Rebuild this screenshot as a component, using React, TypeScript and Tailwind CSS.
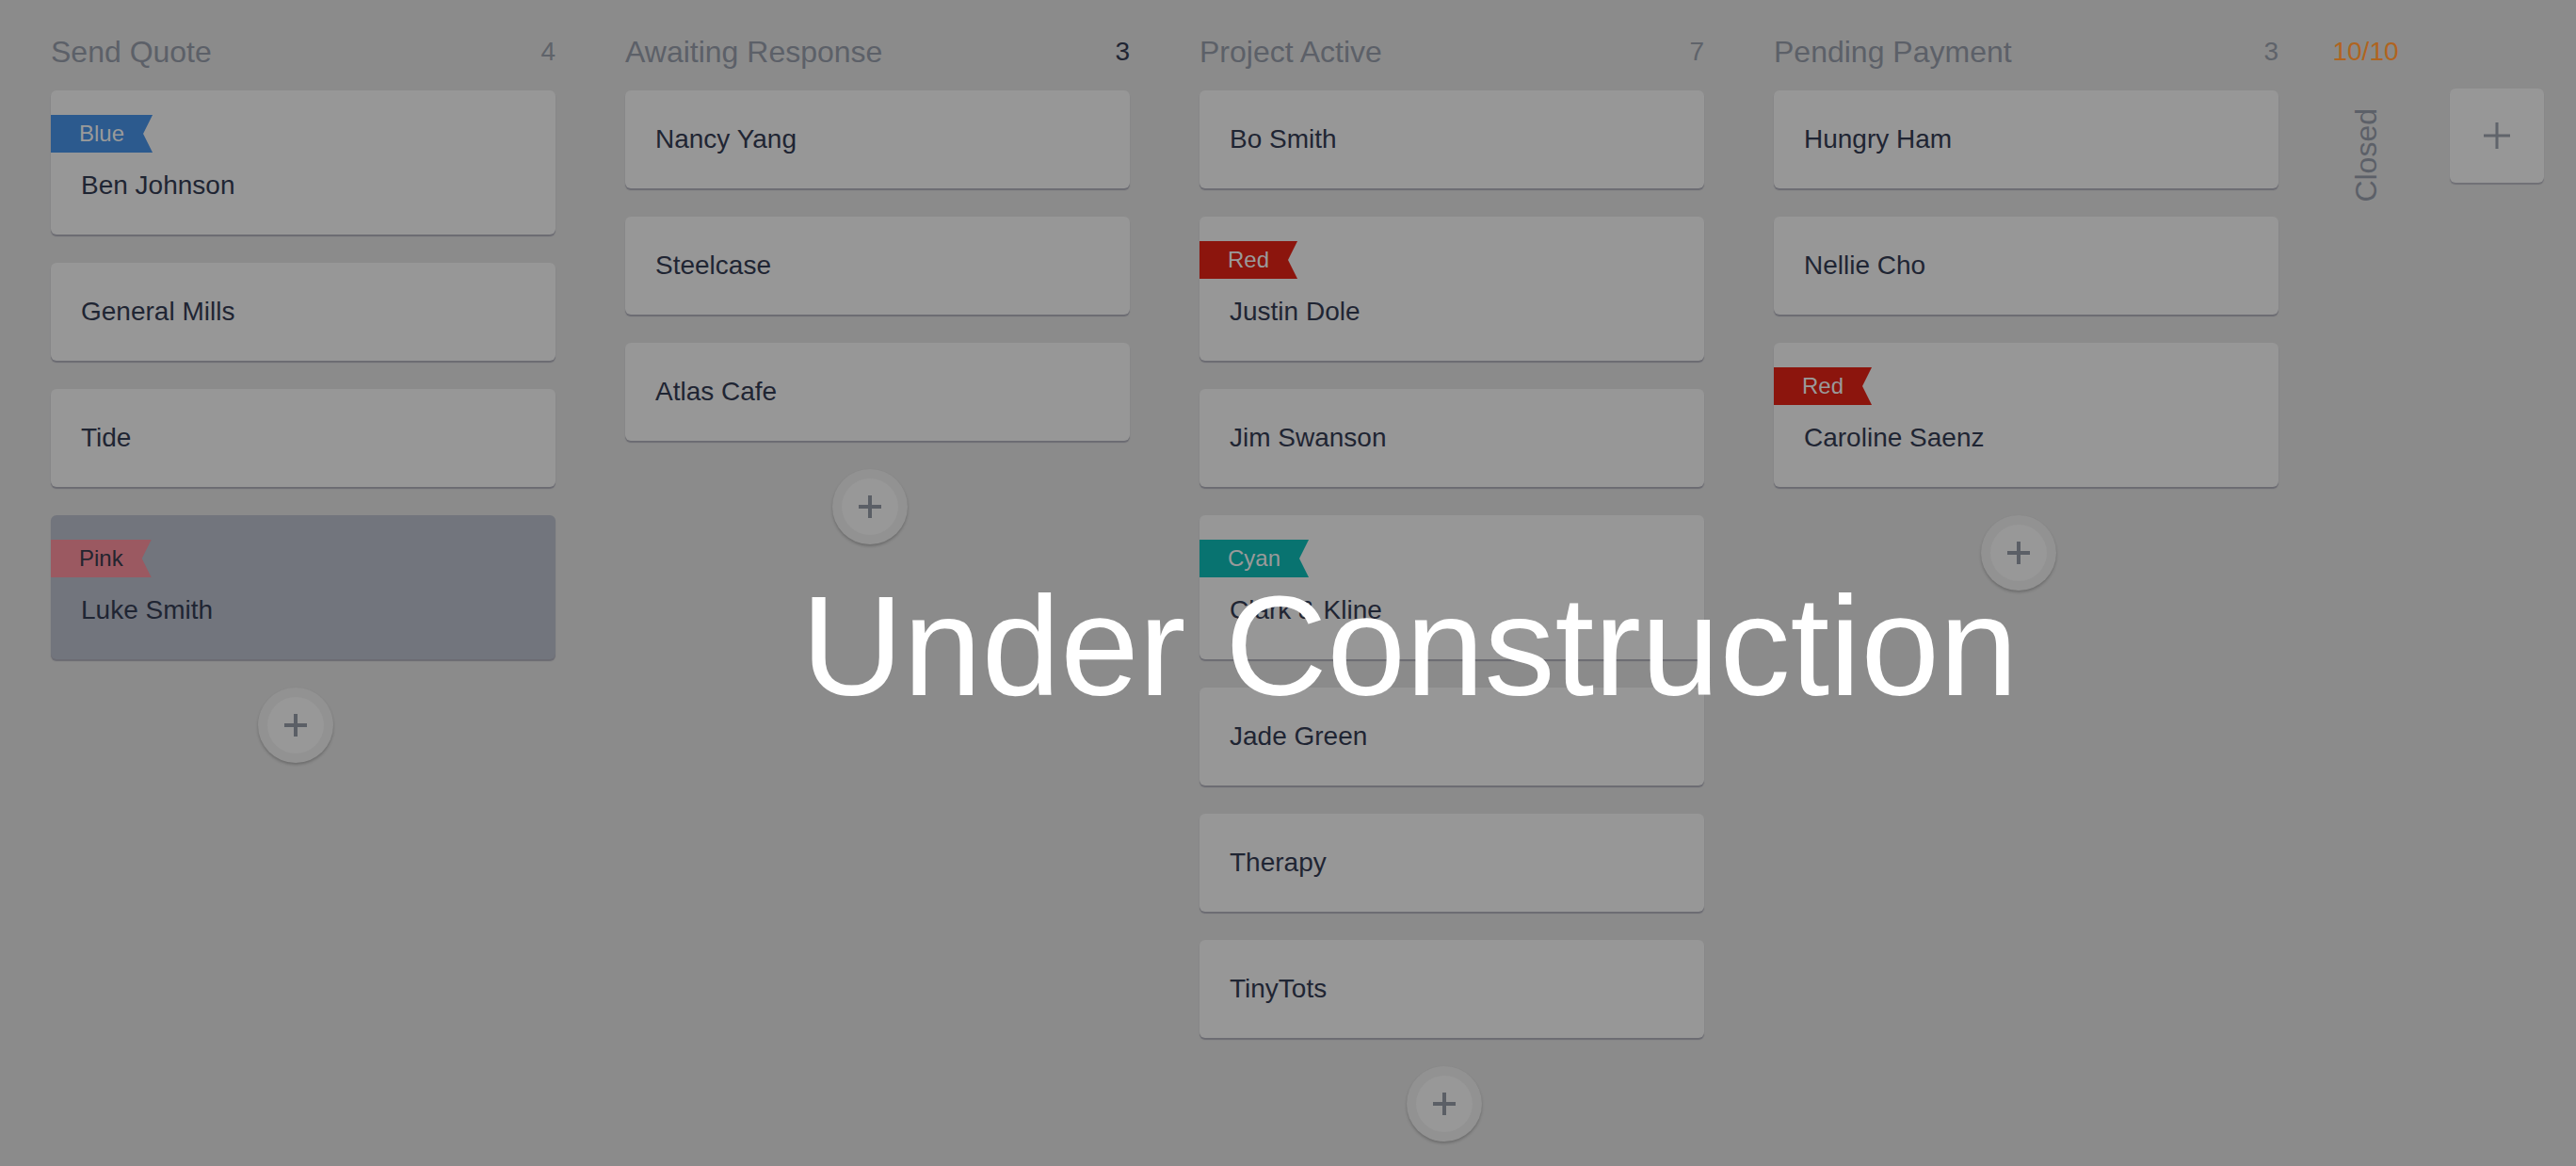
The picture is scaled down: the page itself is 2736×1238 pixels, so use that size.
import React from 'react'

type Tag = { name: string; bg: string; text: string }

type Deal = { title: string; tag?: Tag; selected?: boolean }

type Stage = { name: string; count: number; countDark?: boolean; deals: Deal[] }

const blue: Tag = { name: 'Blue', bg: 'bg-[#2c5a8e]', text: 'text-[#9a9a9a]' }
const red: Tag = { name: 'Red', bg: 'bg-[#8c150d]', text: 'text-[#9a9a9a]' }
const cyan: Tag = { name: 'Cyan', bg: 'bg-[#087370]', text: 'text-[#9a9a9a]' }
const pink: Tag = { name: 'Pink', bg: 'bg-[#9b5961]', text: 'text-[#23252f]' }

const stages: Stage[] = [
  {
    name: 'Send Quote',
    count: 4,
    deals: [
      { title: 'Ben Johnson', tag: blue },
      { title: 'General Mills' },
      { title: 'Tide' },
      { title: 'Luke Smith', tag: pink, selected: true }
    ]
  },
  {
    name: 'Awaiting Response',
    count: 3,
    countDark: true,
    deals: [{ title: 'Nancy Yang' }, { title: 'Steelcase' }, { title: 'Atlas Cafe' }]
  },
  {
    name: 'Project Active',
    count: 7,
    deals: [
      { title: 'Bo Smith' },
      { title: 'Justin Dole', tag: red },
      { title: 'Jim Swanson' },
      { title: 'Clark & Kline', tag: cyan },
      { title: 'Jade Green' },
      { title: 'Therapy' },
      { title: 'TinyTots' }
    ]
  },
  {
    name: 'Pending Payment',
    count: 3,
    deals: [{ title: 'Hungry Ham' }, { title: 'Nellie Cho' }, { title: 'Caroline Saenz', tag: red }]
  }
]

const Plus = ({ size, stroke, className }: { size: number; stroke: number; className?: string }) => (
  <svg width={size} height={size} viewBox="0 0 24 24" className={className}>
    <path d="M12 0v24M0 12h24" stroke="currentColor" strokeWidth={stroke} fill="none" />
  </svg>
)

const DealCard = ({ deal }: { deal: Deal }) => {
  const base = deal.selected ? 'bg-[#72757d]' : 'bg-[#979797]'
  return (
    <div className={`rounded-md ${base} shadow-[0_2px_1px_rgba(50,50,70,0.35)]`}>
      {deal.tag ? (
        <div className="pt-[26px] pb-8">
          <div
            className={`inline-flex h-10 items-center pl-[30px] pr-[30px] text-[24px] ${deal.tag.bg} ${deal.tag.text} [clip-path:polygon(0_0,100%_0,calc(100%_-_10px)_50%,100%_100%,0_100%)]`}
          >
            {deal.tag.name}
          </div>
          <div className="mt-[15px] px-8 text-[28px] leading-[40px] text-[#1f2533]">{deal.title}</div>
        </div>
      ) : (
        <div className="px-8 py-8 text-[28px] leading-[40px] text-[#1f2533]">{deal.title}</div>
      )}
    </div>
  )
}

const StageColumn = ({ stage }: { stage: Stage }) => (
  <div className="flex w-[536px] shrink-0 flex-col">
    <div className="mb-[17px] flex h-12 items-center justify-between">
      <span className="text-[32px] text-[#5c6068]">{stage.name}</span>
      <span className={`text-[28px] ${stage.countDark ? 'text-[#1f2533]' : 'text-[#5f636a]'}`}>{stage.count}</span>
    </div>
    <div className="flex flex-col gap-[30px]">
      {stage.deals.map((deal) => (
        <DealCard key={deal.title} deal={deal} />
      ))}
    </div>
    <div className="mt-[30px] flex justify-center pr-4">
      <button className="flex h-20 w-20 items-center justify-center rounded-full bg-[#929292] shadow-[0_2px_3px_rgba(0,0,0,0.22)]">
        <span className="flex h-[60px] w-[60px] items-center justify-center rounded-full bg-[#989898] text-[#5b5f66]">
          <Plus size={24} stroke={4} />
        </span>
      </button>
    </div>
  </div>
)

export default function App() {
  return (
    <div className="relative h-[1238px] w-full overflow-hidden bg-[#8b8b8b] font-['Liberation_Sans','Helvetica',sans-serif]">
      <div className="flex items-start pl-[54px] pt-[31px]">
        <div className="flex gap-[74px]">
          {stages.map((stage) => (
            <StageColumn key={stage.name} stage={stage} />
          ))}
        </div>

        {/* collapsed column */}
        <div className="ml-[57px] flex w-[71px] shrink-0 flex-col items-center">
          <div className="flex h-12 items-center text-[28px] text-[#b0641f]">10/10</div>
          <div className="mt-[36px] rotate-180 text-[32px] leading-[32px] text-[#5c6068] [writing-mode:vertical-rl]">
            Closed
          </div>
        </div>

        <button className="ml-[54px] mt-[63px] flex h-[100px] w-[100px] shrink-0 items-center justify-center rounded-md bg-[#979797] text-[#60646b] shadow-[0_2px_1px_rgba(50,50,70,0.3)]">
          <Plus size={28} stroke={2.6} />
        </button>
      </div>

      {/* overlay */}
      <div className="pointer-events-none absolute left-[851px] top-[611px] whitespace-nowrap text-[150px] leading-none text-white">
        Under Construction
      </div>
    </div>
  )
}
